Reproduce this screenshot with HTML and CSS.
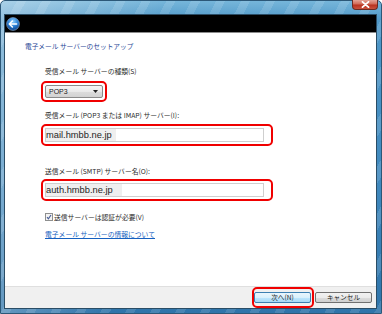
FILE: index.html
```html
<!DOCTYPE html>
<html lang="ja">
<head>
<meta charset="utf-8">
<link rel="stylesheet" href="styles.css">
</head>
<body>
<div class="window">
  <div class="titlebar">
    <div class="close">
      <svg width="9" height="7" viewBox="0 0 9 7"><path d="M1.5 0.8 L7.5 6.2 M7.5 0.8 L1.5 6.2" stroke="#fff" stroke-width="1.8" stroke-linecap="round"/></svg>
    </div>
  </div>
  <div class="client">
    <div class="navbar">
      <svg class="back" width="14" height="14" viewBox="0 0 14 14">
        <defs>
          <radialGradient id="bg" cx="0.5" cy="0.3" r="0.7">
            <stop offset="0" stop-color="#8fd0ff"/>
            <stop offset="0.55" stop-color="#2a7fd4"/>
            <stop offset="1" stop-color="#0b3f86"/>
          </radialGradient>
        </defs>
        <circle cx="7" cy="7" r="6.4" fill="url(#bg)" stroke="#9ab8d8" stroke-width="0.6"/>
        <path d="M3.3 7 H10.6 M3.3 7 L6.4 4 M3.3 7 L6.4 10" stroke="#fff" stroke-width="1.6" stroke-linecap="round" stroke-linejoin="round" fill="none"/>
      </svg>
    </div>
    <div class="content">
      <div class="heading">電子メール サーバーのセットアップ</div>
      <div class="form">
        <div class="label l1">受信メール サーバーの種類(S)</div>
        <div class="mark mark-select">
          <div class="select">
            <span>POP3</span>
            <svg width="5" height="3" viewBox="0 0 5 3"><path d="M0 0 H5 L2.5 3 Z" fill="#222"/></svg>
          </div>
        </div>
        <div class="label l2">受信メール (POP3 または IMAP) サーバー(I):</div>
        <div class="mark mark-input">
          <div class="input"><span class="val v1">mail.hmbb.ne.jp</span></div>
        </div>
        <div class="label l3">送信メール (SMTP) サーバー名(O):</div>
        <div class="mark mark-input m3">
          <div class="input"><span class="val v2">auth.hmbb.ne.jp</span></div>
        </div>
        <div class="check">
          <svg width="8" height="8" viewBox="0 0 8 8"><rect x="0.5" y="0.5" width="7" height="7" fill="#f4f4f4" stroke="#8e8f8f"/><path d="M2 4.2 L3.4 5.8 L6 2" stroke="#4a5f97" stroke-width="1.2" fill="none"/></svg>
          <span>送信サーバーは認証が必要(V)</span>
        </div>
        <a class="link" href="#">電子メール サーバーの情報について</a>
      </div>
    </div>
    <div class="footer">
      <div class="mark mark-btn"><div class="btn primary">次へ(N)</div></div>
      <div class="btn">キャンセル</div>
    </div>
  </div>
</div>
</body>
</html>
```

FILE: styles.css
```css
html, body {
  margin: 0;
  padding: 0;
}
body {
  width: 382px;
  height: 314px;
  overflow: hidden;
  font-family: "Noto Sans CJK JP", "Noto Sans", sans-serif;
}
.window {
  width: 382px;
  height: 314px;
  box-sizing: border-box;
  display: flex;
  flex-direction: column;
  background:
    linear-gradient(100deg, rgba(255,255,255,0.38) 0, rgba(255,255,255,0.2) 18%, rgba(255,255,255,0) 38%),
    repeating-linear-gradient(118deg, rgba(255,255,255,0) 0 14px, rgba(255,255,255,0.12) 14px 22px),
    linear-gradient(to bottom, #76b6da 0, #4f98c8 20px, #3f88bd 60%, #2f74aa 100%);
  border: 1px solid #2c5878;
  border-radius: 5px 5px 0 0;
}
.titlebar {
  height: 14px;
  display: flex;
  justify-content: flex-end;
  align-items: flex-start;
  padding-right: 3px;
}
.close {
  width: 24px;
  height: 9px;
  margin-top: -1px;
  border: 1px solid #6b2b22;
  border-top: none;
  border-radius: 0 0 4px 4px;
  background: linear-gradient(to bottom, #e3a396 0, #d26a57 45%, #b8321f 55%, #c9503c 100%);
  display: flex;
  align-items: center;
  justify-content: center;
}
.client {
  flex: 1;
  margin: 0 4px 4px 3px;
  border: 1px solid #2a4d66;
  display: flex;
  flex-direction: column;
  background: #fff;
}
.navbar {
  height: 17px;
  background: #000;
  border-bottom: 1px solid #8c8c8c;
  display: flex;
  align-items: center;
  padding-left: 1px;
}
.back {
  display: block;
}
.content {
  height: 253px;
  background: #fff;
}
.heading {
  margin-top: 8px;
  padding-left: 20px;
  font-size: 6.7px;
  line-height: 10px;
  color: #1f4796;
  white-space: nowrap;
}
.form {
  margin-left: 36px;
  display: flex;
  flex-direction: column;
  align-items: flex-start;
}
.label {
  padding-left: 4px;
  font-size: 6.8px;
  line-height: 10px;
  color: #2a2a2a;
  white-space: nowrap;
}
.l1 { margin-top: 15px; }
.l2 { margin-top: 8px; }
.l3 { margin-top: 20px; }
.mark {
  border: 2px solid #f00000;
  border-radius: 5px;
  padding: 2px;
  display: flex;
}
.mark-select { margin-top: 5px; }
.mark-input { margin-top: 4px; padding-right: 7px; }
.m3 { margin-top: 3px; }
.select {
  width: 58px;
  height: 13px;
  box-sizing: border-box;
  border: 1px solid #8a8a8a;
  border-radius: 2px;
  background: linear-gradient(to bottom, #f6f6f6 0, #e9e9e9 50%, #dcdcdc 51%, #d2d2d2 100%);
  display: flex;
  align-items: center;
  justify-content: space-between;
  padding: 0 4px 0 3px;
  font-family: "Liberation Sans", sans-serif;
  font-size: 7px;
  color: #1a1a1a;
}
.input {
  width: 219px;
  height: 14px;
  box-sizing: border-box;
  border: 1px solid #cfcfcf;
  background: #fff;
  display: flex;
}
.val {
  background: #efefef;
  font-family: "Liberation Sans", sans-serif;
  font-size: 9.3px;
  line-height: 12px;
  color: #1e1e1e;
  padding-left: 0;
}
.v1 { padding-right: 4px; }
.v2 { padding-right: 9px; }
.check {
  margin-top: 11px;
  padding-left: 4px;
  height: 10px;
  display: flex;
  align-items: center;
  gap: 1px;
  font-size: 6.8px;
  color: #2a2a2a;
  white-space: nowrap;
}
.check svg { display: block; }
.link {
  margin-top: 7px;
  margin-left: 4px;
  font-size: 6.8px;
  line-height: 10px;
  color: #1560c0;
  text-decoration: underline;
  white-space: nowrap;
}
.footer {
  flex: 1;
  background: #f0f0f0;
  border-top: 1px solid #dfdfdf;
  display: flex;
  justify-content: flex-end;
  align-items: center;
  padding-right: 4px;
  gap: 1px;
}
.mark-btn {
  padding: 3px 1px 3px 0;
}
.btn {
  width: 57px;
  height: 11px;
  box-sizing: border-box;
  border: 1px solid #707070;
  border-radius: 2px;
  background: linear-gradient(to bottom, #f2f2f2 0, #ebebeb 50%, #dddddd 51%, #cfcfcf 100%);
  font-size: 6.6px;
  line-height: 9px;
  text-align: center;
  color: #1a1a1a;
  white-space: nowrap;
}
.btn.primary {
  border-color: #3c7fb1;
  background: linear-gradient(to bottom, #eaf6fd 0, #d9f0fc 50%, #bee6fd 51%, #a7d9f5 100%);
}
```
